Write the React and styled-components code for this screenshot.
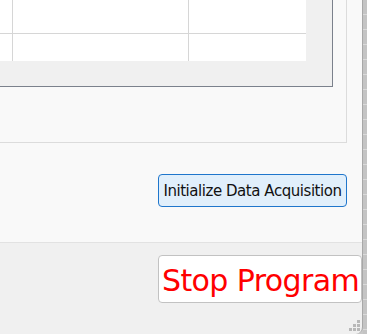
import React from "react";
import styled, { createGlobalStyle } from "styled-components";

const GlobalStyle = createGlobalStyle`
  html, body {
    margin: 0;
    padding: 0;
    overflow: hidden;
    background: #c8c8c8;
  }
  body {
    font-family: "DejaVu Sans", "Liberation Sans", sans-serif;
  }
`;

const Window = styled.div`
  display: flex;
  width: 367px;
  height: 334px;
  overflow: hidden;
`;

const Main = styled.div`
  display: flex;
  flex-direction: column;
  width: 362px;
  height: 334px;
  border-right: 1px solid #a8a8a8;
  border-bottom-right-radius: 7px;
  overflow: hidden;
  background: #f0f0f0;
`;

const Strip = styled.div`
  flex: 1;
  background: repeating-linear-gradient(
    to bottom,
    #c4c4c4 0px,
    #c4c4c4 14px,
    #dadada 14px,
    #dadada 15px
  );
`;

const TopArea = styled.div`
  height: 242px;
  background: #f9f9f9;
  border-bottom: 1px solid #e2e2e2;
  display: flex;
  flex-direction: column;
`;

const Panel = styled.div`
  width: 346px;
  height: 142px;
  border-right: 1px solid #dcdcdc;
  border-bottom: 1px solid #dcdcdc;
`;

const TableFrame = styled.div`
  width: 332px;
  height: 86px;
  background: #f0f0f0;
  border-right: 1px solid #7b818c;
  border-bottom: 1px solid #7b818c;
  box-sizing: content-box;
`;

const Grid = styled.div`
  display: grid;
  grid-template-columns: 13px 176px 117px;
  grid-template-rows: 34px 26px;
  width: 306px;
  background: #ffffff;
`;

const Cell = styled.div`
  background: #ffffff;
  border-right: ${({ $last }) => ($last ? "none" : "1px solid #d6d6d6")};
  border-bottom: ${({ $bottom }) => ($bottom ? "none" : "1px solid #d6d6d6")};
  height: ${({ $bottom }) => ($bottom ? "27px" : "auto")};
`;

const ButtonRow = styled.div`
  display: flex;
  justify-content: flex-end;
  width: 347px;
  margin-top: 31px;
`;

const InitButton = styled.button`
  width: 189px;
  height: 33px;
  padding: 0;
  background: #e1effb;
  border: 1px solid #1f76cc;
  border-radius: 4px;
  color: #111111;
  font-family: "DejaVu Sans", "Liberation Sans", sans-serif;
  font-size: 15px;
  letter-spacing: -0.45px;
  white-space: nowrap;
`;

const BottomArea = styled.div`
  position: relative;
  flex: 1;
  display: flex;
  justify-content: flex-end;
  align-items: flex-start;
  padding-top: 12px;
`;

const StopButton = styled.button`
  width: 204px;
  height: 48px;
  padding: 4px 0 0 1px;
  background: #ffffff;
  border: 1px solid #c2c2c2;
  border-radius: 4px;
  color: #ff0000;
  font-family: "DejaVu Sans", "Liberation Sans", sans-serif;
  font-size: 30px;
  letter-spacing: -0.6px;
  line-height: 40px;
  white-space: nowrap;
`;

const Grip = styled.svg`
  position: absolute;
  right: 1px;
  bottom: 2px;
`;

const ResizeGrip = () => (
  <Grip width="12" height="12" viewBox="0 0 12 12">
    <rect x="8" y="0" width="3" height="3" fill="#b8b8b8" />
    <rect x="4" y="4" width="3" height="3" fill="#b8b8b8" />
    <rect x="8" y="4" width="3" height="3" fill="#b8b8b8" />
    <rect x="0" y="8" width="3" height="3" fill="#b8b8b8" />
    <rect x="4" y="8" width="3" height="3" fill="#b8b8b8" />
    <rect x="8" y="8" width="3" height="3" fill="#b8b8b8" />
  </Grip>
);

export default function App() {
  return (
    <>
      <GlobalStyle />
      <Window>
        <Main>
          <TopArea>
            <Panel>
              <TableFrame>
                <Grid>
                  <Cell />
                  <Cell />
                  <Cell $last />
                  <Cell $bottom />
                  <Cell $bottom />
                  <Cell $bottom $last />
                </Grid>
              </TableFrame>
            </Panel>
            <ButtonRow>
              <InitButton type="button">Initialize Data Acquisition</InitButton>
            </ButtonRow>
          </TopArea>
          <BottomArea>
            <StopButton type="button">Stop Program</StopButton>
            <ResizeGrip />
          </BottomArea>
        </Main>
        <Strip />
      </Window>
    </>
  );
}
